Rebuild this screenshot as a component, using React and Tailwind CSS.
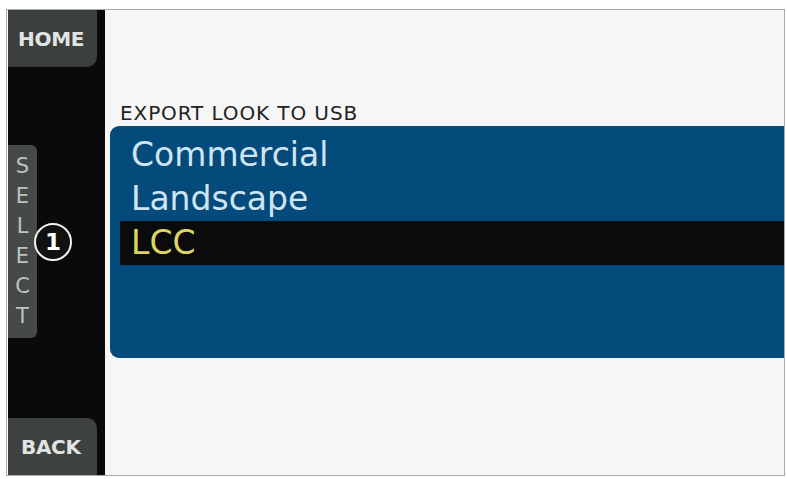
import React from 'react';

const looks = ["Commercial", "Landscape", "LCC"];

const App = () => {
  const selected = 2;
  const letters = "SELECT".split("");

  return (
    <div className="w-[787px] h-[479px] bg-white pl-[6px] pt-[9px] overflow-hidden" style={{ fontFamily: '"DejaVu Sans", sans-serif' }}>
      <div className="w-[779px] h-[467px] border border-[#a9a9a9] pl-[1px] flex">
        {/* left softkey column */}
        <aside className="relative w-[97px] shrink-0 bg-[#0a0a0a] flex flex-col">
          <div className="h-[57px] w-[89px] bg-[#3b3f3d] rounded-br-[10px] flex items-center pl-[10px]">
            <span className="text-[#e2e4e2] text-[20px] font-bold tracking-[-0.3px]">HOME</span>
          </div>
          <div className="mt-[78px] h-[193px] w-[29px] bg-[#454947] rounded-r-[6px] flex flex-col items-center pt-[6px]">
            {letters.map((l, i) => (
              <span key={i} className="text-[#bfc3bf] text-[21px] leading-[30px]">{l}</span>
            ))}
          </div>
          <div className="flex-1" />
          <div className="h-[57px] w-[89px] bg-[#3d413f] rounded-tr-[10px] flex items-center pl-[13px]">
            <span className="text-[#e2e4e2] text-[20px] font-bold tracking-[-0.3px]">BACK</span>
          </div>

          {/* callout marker */}
          <div className="absolute left-[26px] top-[213px] w-[38px] h-[38px] rounded-full border-2 border-[#f2f2f2] bg-[#111] flex items-center justify-center">
            <span className="text-white text-[23px] font-bold leading-none">1</span>
          </div>
        </aside>

        <main className="flex-1 bg-[#f6f6f6] pt-[91px]">
          <div className="pl-[15px] h-[24px] text-[20px] leading-[24px] text-[#222] tracking-[0.9px]">EXPORT LOOK TO USB</div>
          <div className="mt-[1px] ml-[5px] h-[232px] bg-[#044a7b] rounded-l-[9px] pt-[7px] pl-[10px]">
            {looks.map((name, i) => (
              <div
                key={name}
                className={`h-[44px] pl-[11px] text-[33px] leading-[44px] ${i === selected ? 'bg-[#0b0b0b] text-[#ddd55f]' : 'text-[#cfe5f3]'}`}
              >
                {name}
              </div>
            ))}
          </div>
        </main>
      </div>
    </div>
  );
};

export default App;
